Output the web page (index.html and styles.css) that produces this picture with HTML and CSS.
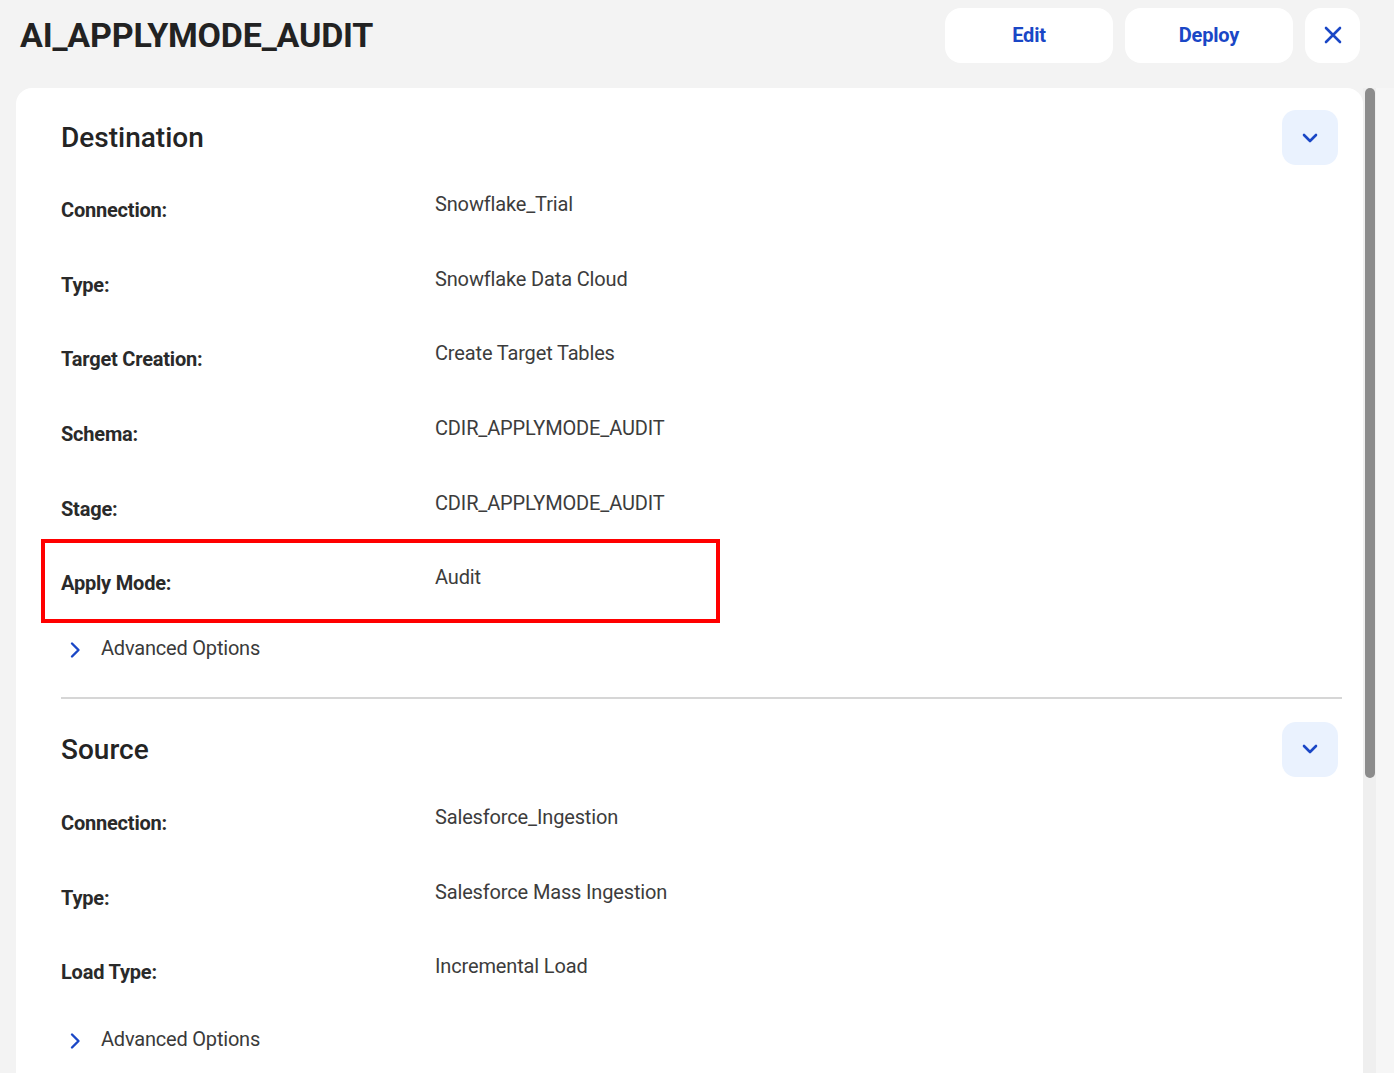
FILE: index.html
```html
<!DOCTYPE html>
<html>
<head>
<meta charset="utf-8">
<link rel="stylesheet" href="styles.css">
</head>
<body>
<div class="page">
  <header class="topbar">
    <h1 class="title">AI_APPLYMODE_AUDIT</h1>
    <div class="actions">
      <button class="btn">Edit</button>
      <button class="btn">Deploy</button>
      <button class="btn btn-icon" aria-label="Close">
        <svg width="20" height="20" viewBox="0 0 20 20"><path d="M3 3L17 17M17 3L3 17" stroke="#1a47c6" stroke-width="2.6" stroke-linecap="round" fill="none"/></svg>
      </button>
    </div>
  </header>
  <div class="body-row">
    <main class="card">
      <section class="section">
        <div class="section-head">
          <h2 class="section-title">Destination</h2>
          <button class="toggle" aria-label="Collapse">
            <svg width="18" height="12" viewBox="0 0 18 12"><path d="M3 3L9 9L15 3" stroke="#1a47c6" stroke-width="2.6" stroke-linecap="round" stroke-linejoin="round" fill="none"/></svg>
          </button>
        </div>
        <div class="rows">
          <div class="row"><span class="label">Connection:</span><span class="value">Snowflake_Trial</span></div>
          <div class="row"><span class="label">Type:</span><span class="value">Snowflake Data Cloud</span></div>
          <div class="row"><span class="label">Target Creation:</span><span class="value">Create Target Tables</span></div>
          <div class="row"><span class="label">Schema:</span><span class="value">CDIR_APPLYMODE_AUDIT</span></div>
          <div class="row"><span class="label">Stage:</span><span class="value">CDIR_APPLYMODE_AUDIT</span></div>
          <div class="row highlighted"><span class="label">Apply Mode:</span><span class="value">Audit</span><span class="highlight-box"></span></div>
        </div>
        <div class="advanced">
          <svg class="adv-icon" width="14" height="18" viewBox="0 0 14 18"><path d="M4 2.5L10.5 9L4 15.5" stroke="#1a47c6" stroke-width="2.4" stroke-linecap="round" stroke-linejoin="round" fill="none"/></svg>
          <span>Advanced Options</span>
        </div>
      </section>
      <hr class="divider">
      <section class="section section-source">
        <div class="section-head">
          <h2 class="section-title">Source</h2>
          <button class="toggle" aria-label="Collapse">
            <svg width="18" height="12" viewBox="0 0 18 12"><path d="M3 3L9 9L15 3" stroke="#1a47c6" stroke-width="2.6" stroke-linecap="round" stroke-linejoin="round" fill="none"/></svg>
          </button>
        </div>
        <div class="rows">
          <div class="row"><span class="label">Connection:</span><span class="value">Salesforce_Ingestion</span></div>
          <div class="row"><span class="label">Type:</span><span class="value">Salesforce Mass Ingestion</span></div>
          <div class="row"><span class="label">Load Type:</span><span class="value">Incremental Load</span></div>
        </div>
        <div class="advanced">
          <svg class="adv-icon" width="14" height="18" viewBox="0 0 14 18"><path d="M4 2.5L10.5 9L4 15.5" stroke="#1a47c6" stroke-width="2.4" stroke-linecap="round" stroke-linejoin="round" fill="none"/></svg>
          <span>Advanced Options</span>
        </div>
      </section>
    </main>
    <div class="scrollbar"><div class="thumb"></div></div>
    <div class="edge"></div>
  </div>
</div>
</body>
</html>
```

FILE: styles.css
```css
* { box-sizing: border-box; }
html, body { margin: 0; padding: 0; }
body {
  background: #f3f3f3;
  font-family: Roboto, "Liberation Sans", Arial, sans-serif;
  color: #2a2a2a;
  width: 1394px;
  height: 1073px;
  overflow: hidden;
}
.page { display: flex; flex-direction: column; }
.topbar {
  display: flex;
  align-items: flex-start;
  justify-content: space-between;
  height: 88px;
  padding: 8px 34px 0 20px;
}
.title {
  margin: 7px 0 0;
  font-size: 34px;
  line-height: 40px;
  font-weight: 700;
  letter-spacing: -0.2px;
  color: #222;
}
.actions { display: flex; gap: 12px; }
.btn {
  width: 168px;
  height: 55px;
  border: none;
  border-radius: 16px;
  background: #fff;
  color: #1a47c6;
  font-family: Roboto, "Liberation Sans", Arial, sans-serif;
  font-size: 20px;
  font-weight: 700;
  letter-spacing: -0.2px;
  display: flex;
  align-items: center;
  justify-content: center;
  padding: 0 0 2px;
}
.btn-icon { width: 55px; }
.body-row { display: flex; align-items: flex-start; }
.card {
  margin-left: 16px;
  width: 1347px;
  height: 1000px;
  background: #fff;
  border-radius: 16px 16px 0 0;
  padding: 22px 21px 0 45px;
}
.scrollbar {
  width: 13px;
  height: 985px;
  background: #efefef;
  padding: 0 2px 0 2px;
}
.thumb {
  width: 10px;
  height: 690px;
  background: #8c8c8c;
  border-radius: 5px;
}
.edge { width: 18px; height: 985px; background: #f6f6f6; }
.section { display: flex; flex-direction: column; }
.section-head {
  display: flex;
  align-items: center;
  justify-content: space-between;
  height: 55px;
  padding-right: 4px;
}
.section-title {
  margin: 0;
  font-size: 28px;
  font-weight: 500;
  letter-spacing: 0;
  color: #242424;
}
.toggle {
  width: 56px;
  height: 55px;
  border: none;
  border-radius: 14px;
  background: #eaf2fe;
  display: flex;
  align-items: center;
  justify-content: center;
  padding: 0;
}
.rows { margin-top: 7.5px; display: flex; flex-direction: column; }
.section-source .rows { margin-top: 9px; }
.row {
  position: relative;
  height: 74.7px;
  display: grid;
  grid-template-columns: 374px 1fr;
  align-items: center;
}
.label {
  font-size: 20px;
  font-weight: 700;
  letter-spacing: -0.2px;
  color: #2a2a2a;
}
.value {
  font-size: 20px;
  font-weight: 400;
  letter-spacing: -0.15px;
  color: #3c3c3c;
  margin-bottom: 12px;
}
.highlight-box {
  position: absolute;
  left: -20px;
  top: -6.5px;
  width: 679px;
  height: 84px;
  border: 4px solid #ff0000;
}
.advanced {
  display: flex;
  align-items: center;
  gap: 19px;
  height: 40px;
  margin-top: 7px;
  padding-left: 7px;
  font-size: 20px;
  letter-spacing: -0.2px;
  color: #3a3a3a;
}
.section-source .advanced { margin-top: 9px; }
.adv-icon { margin-top: 4px; }
.divider {
  margin: 29px 0 23px;
  border: none;
  border-top: 2px solid #d6d6d6;
  height: 0;
}
```
